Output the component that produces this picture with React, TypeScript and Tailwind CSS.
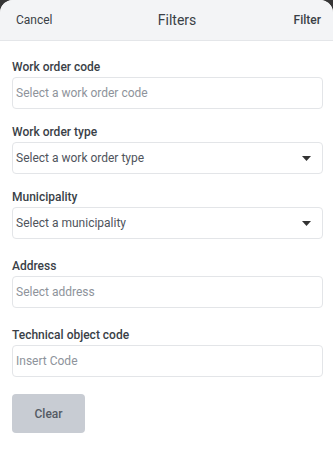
const Caret = () => (
  <svg width="9" height="5" viewBox="0 0 9 5" className="text-[#333]">
    <path d="M0 0h9L4.5 5z" fill="currentColor" />
  </svg>
);

const Field = ({
  label,
  placeholder,
  select,
  className,
}: {
  label: string;
  placeholder: string;
  select?: boolean;
  className?: string;
}) => (
  <div className={className}>
    <label className="block text-[12px] leading-4 font-medium text-[#3a3f47]">{label}</label>
    <div className="mt-[2px] h-8 flex items-center justify-between border border-[#e3e5e8] rounded-[4px] pl-[3px] pr-[11px]">
      <span className={select ? "text-[12px] text-[#4f545c]" : "text-[12px] text-[#8e939b]"}>
        {placeholder}
      </span>
      {select && <Caret />}
    </div>
  </div>
);

export default function App() {
  return (
    <div className="h-screen bg-[#363636] font-['Roboto',sans-serif]">
      <div className="h-full bg-white rounded-t-[13px] overflow-hidden">
        <div className="h-[41px] bg-[#f3f4f6] border-b border-[#e4e6e9] flex items-center justify-between pl-4 pr-3">
          <button className="text-[12px] text-[#3a3f46]">Cancel</button>
          <span className="text-[14px] text-[#3a3f46] ml-2">Filters</span>
          <button className="text-[12px] font-medium text-[#3a3f46]">Filter</button>
        </div>
        <div className="pl-3 pr-[10px] pt-[18px]">
          <Field label="Work order code" placeholder="Select a work order code" />
          <Field className="mt-[15px]" label="Work order type" placeholder="Select a work order type" select />
          <Field className="mt-[15px]" label="Municipality" placeholder="Select a municipality" select />
          <Field className="mt-[19px]" label="Address" placeholder="Select address" />
          <Field className="mt-[19px]" label="Technical object code" placeholder="Insert Code" />
          <button className="mt-[17px] w-[73px] h-[39px] rounded-[4px] bg-[#c8ccd3] text-[12px] font-medium text-[#555b64]">
            Clear
          </button>
        </div>
      </div>
    </div>
  );
}
